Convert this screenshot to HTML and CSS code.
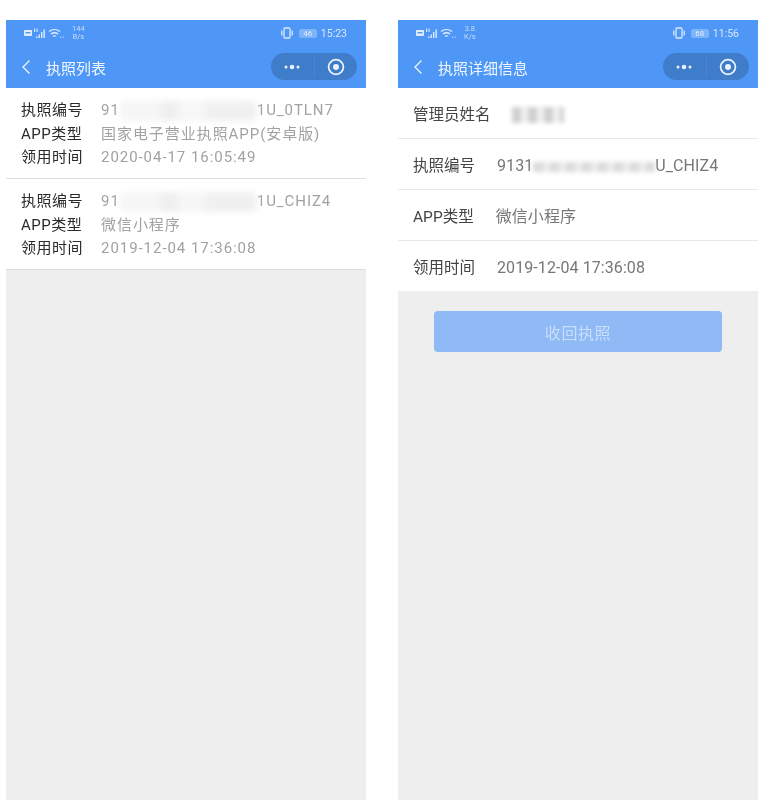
FILE: index.html
```html
<!DOCTYPE html>
<html lang="zh">
<head>
<meta charset="utf-8">
<title>执照</title>
<link rel="stylesheet" href="styles.css">
</head>
<body>
<svg class="defs" width="0" height="0" aria-hidden="true">
  <symbol id="i-status" viewBox="0 0 43 12">
    <rect x="0" y="3" width="8" height="6" rx="1" fill="currentColor"/>
    <rect x="1.500" y="5" width="5" height="1.400" fill="#4f97f7"/>
    <path d="M10 1.500h1.200v3.500H10zM12.500 1.500h1.200v3.500h-1.200z" fill="currentColor" opacity=".85"/>
    <path d="M12 9.500h1.400v1.500H12zM14.500 7.500h1.400v3.500h-1.400zM17 5h1.400v6H17zM19.500 2.500h1.400v8.500h-1.400z" fill="currentColor"/>
    <path d="M25 4.500a9 9 0 0 1 11 0M27 7a6 6 0 0 1 7 0M29 9.300a3 3 0 0 1 3 0" fill="none" stroke="currentColor" stroke-width="1.300"/>
    <path d="M36 9.500h1.200v1.200H36zM38.500 9.500h1.200v1.200h-1.200z" fill="currentColor" opacity=".7"/>
  </symbol>
  <symbol id="i-vibrate" viewBox="0 0 12 12">
    <rect x="3" y="1" width="6" height="10" rx="1" fill="none" stroke="currentColor" stroke-width="1.300"/>
    <path d="M.8 3.500v5M11.200 3.500v5" stroke="currentColor" stroke-width="1.300"/>
  </symbol>
  <symbol id="i-back" viewBox="0 0 10 16">
    <path d="M8.500 1.500 2 8l6.500 6.500" fill="none" stroke="currentColor" stroke-width="1.400"/>
  </symbol>
  <symbol id="i-more" viewBox="0 0 18 6">
    <circle cx="3" cy="3" r="1.500" fill="currentColor"/>
    <circle cx="9" cy="3" r="2.300" fill="currentColor"/>
    <circle cx="15" cy="3" r="1.500" fill="currentColor"/>
  </symbol>
  <symbol id="i-target" viewBox="0 0 18 18">
    <circle cx="9" cy="9" r="7.400" fill="none" stroke="currentColor" stroke-width="1.800"/>
    <circle cx="9" cy="9" r="3" fill="currentColor"/>
  </symbol>
</svg>

<main class="screens">
  <section class="phone">
    <header class="appbar">
      <div class="status">
        <div class="status-left">
          <svg class="ic-status"><use href="#i-status"/></svg>
          <span class="speed">144<br>B/s</span>
        </div>
        <div class="status-right">
          <svg class="ic-vibrate"><use href="#i-vibrate"/></svg>
          <span class="battery">46</span>
          <span class="clock">15:23</span>
        </div>
      </div>
      <div class="nav">
        <svg class="ic-back"><use href="#i-back"/></svg>
        <h1 class="title">执照列表</h1>
        <div class="capsule">
          <span class="cap-cell cap-more"><svg class="ic-more"><use href="#i-more"/></svg></span>
          <span class="cap-cell"><svg class="ic-target"><use href="#i-target"/></svg></span>
        </div>
      </div>
    </header>
    <div class="list">
      <article class="card">
        <div class="line"><span class="key">执照编号</span><span class="val">91<i class="smudge smudge-list"></i>1U_0TLN7</span></div>
        <div class="line"><span class="key">APP类型</span><span class="val">国家电子营业执照APP(安卓版)</span></div>
        <div class="line"><span class="key">领用时间</span><span class="val">2020-04-17 16:05:49</span></div>
      </article>
      <article class="card">
        <div class="line"><span class="key">执照编号</span><span class="val">91<i class="smudge smudge-list"></i>1U_CHIZ4</span></div>
        <div class="line"><span class="key">APP类型</span><span class="val">微信小程序</span></div>
        <div class="line"><span class="key">领用时间</span><span class="val">2019-12-04 17:36:08</span></div>
      </article>
    </div>
  </section>

  <section class="phone">
    <header class="appbar">
      <div class="status">
        <div class="status-left">
          <svg class="ic-status"><use href="#i-status"/></svg>
          <span class="speed">3.8<br>K/s</span>
        </div>
        <div class="status-right">
          <svg class="ic-vibrate"><use href="#i-vibrate"/></svg>
          <span class="battery">68</span>
          <span class="clock">11:56</span>
        </div>
      </div>
      <div class="nav">
        <svg class="ic-back"><use href="#i-back"/></svg>
        <h1 class="title">执照详细信息</h1>
        <div class="capsule">
          <span class="cap-cell cap-more"><svg class="ic-more"><use href="#i-more"/></svg></span>
          <span class="cap-cell"><svg class="ic-target"><use href="#i-target"/></svg></span>
        </div>
      </div>
    </header>
    <div class="detail">
      <div class="row"><span class="row-key">管理员姓名</span><i class="smudge smudge-name"></i></div>
      <div class="row"><span class="row-key">执照编号</span><span class="row-val">9131<i class="smudge smudge-id"></i>U_CHIZ4</span></div>
      <div class="row"><span class="row-key">APP类型</span><span class="row-val">微信小程序</span></div>
      <div class="row"><span class="row-key">领用时间</span><span class="row-val">2019-12-04 17:36:08</span></div>
    </div>
    <button class="revoke" type="button">收回执照</button>
  </section>
</main>
</body>
</html>
```

FILE: styles.css
```css
* { box-sizing: border-box; }
html, body { margin: 0; height: 100%; }
body {
  background: #fff;
  font-family: Roboto, "Noto Sans CJK SC", sans-serif;
  overflow: hidden;
}
.defs { position: absolute; }

.screens {
  display: flex;
  gap: 32px;
  height: 800px;
  padding: 20px 0 0 6px;
}
.phone {
  display: flex;
  flex-direction: column;
  width: 360px;
  background: #eeeeee;
  filter: blur(.4px);
}

.appbar {
  height: 68px;
  background: #4f97f7;
  color: #dbe9fd;
}
.status {
  display: flex;
  justify-content: space-between;
  align-items: center;
  height: 26px;
  padding: 0 19px 0 18px;
}
.status-left, .status-right { display: flex; align-items: center; }
.ic-status { width: 43px; height: 12px; color: #e2eefe; }
.speed {
  margin-left: 5px;
  font-size: 7.500px;
  line-height: 8px;
  text-align: center;
  color: #c6dcfb;
}
.ic-vibrate { width: 12px; height: 12px; color: #dbe9fd; }
.battery {
  width: 18px;
  height: 9px;
  margin-left: 6px;
  border-radius: 2px;
  background: #7fb3f8;
  color: #e0edfe;
  font-size: 8px;
  line-height: 9px;
  text-align: center;
}
.clock { margin-left: 4px; font-size: 10.500px; color: #d6e6fd; }

.nav {
  display: flex;
  align-items: center;
  height: 42px;
  padding: 0 9px 0 15px;
}
.ic-back { width: 10px; height: 16px; color: #e8f1fe; }
.title {
  flex: 1;
  margin: 0 0 0 15px;
  font-size: 15px;
  font-weight: 400;
  color: #f0f6ff;
}
.capsule {
  display: flex;
  align-items: center;
  width: 86px;
  height: 27px;
  margin-top: -1px;
  border-radius: 14px;
  background: #3f7cc9;
}
.cap-cell {
  display: flex;
  flex: 1;
  align-items: center;
  justify-content: center;
  height: 20px;
  color: #e9f2fe;
}
.cap-more { border-right: 1px solid #4a86d2; }
.ic-more { width: 18px; height: 6px; }
.ic-target { width: 18px; height: 18px; }

.list { background: #fff; }
.card {
  height: 91px;
  padding: 11px 0 0 15px;
  border-bottom: 1px solid #dedede;
}
.line {
  display: flex;
  align-items: baseline;
  height: 23.500px;
  font-size: 15px;
  line-height: 23.500px;
}
.key { width: 80px; letter-spacing: .5px; color: #2a2a2a; white-space: nowrap; }
.val { letter-spacing: .95px; color: #a2a2a2; white-space: nowrap; }

.smudge {
  display: inline-block;
  vertical-align: middle;
}
.smudge-list {
  width: 137px;
  height: 20px;
  border-radius: 6px;
  background: linear-gradient(90deg, #f6f6f6 0 30%, #efefef 30% 42%, #f7f7f7 42% 62%, #f0f0f0 62% 100%);
  filter: blur(3px);
}
.smudge-name {
  align-self: center;
  width: 52px;
  height: 16px;
  margin: 4px 0 0 21px;
  background: repeating-linear-gradient(90deg, #d0d0d0 0 9px, #f0f0f0 9px 16px);
  filter: blur(2px);
}
.smudge-id {
  width: 122px;
  height: 10px;
  background: repeating-linear-gradient(90deg, #dcdcdc 0 11px, #efefef 11px 16px);
  filter: blur(2px);
}

.detail { background: #fff; }
.row {
  display: flex;
  align-items: baseline;
  height: 51px;
  padding-left: 15px;
  border-bottom: 1px solid #e8e8e8;
  font-size: 15.500px;
  line-height: 54px;
}
.row:last-child { height: 50px; border-bottom: 0; }
.row-key { color: #444; white-space: nowrap; }
.row-val { margin-left: 22px; font-size: 16px; letter-spacing: .08px; color: #777; white-space: nowrap; }

.revoke {
  align-self: center;
  width: 288px;
  height: 41px;
  margin-top: 20px;
  border: 0;
  border-radius: 4px;
  background: #8fbaf5;
  color: #c9defb;
  font: 400 16px Roboto, "Noto Sans CJK SC", sans-serif;
  letter-spacing: .6px;
}
```
